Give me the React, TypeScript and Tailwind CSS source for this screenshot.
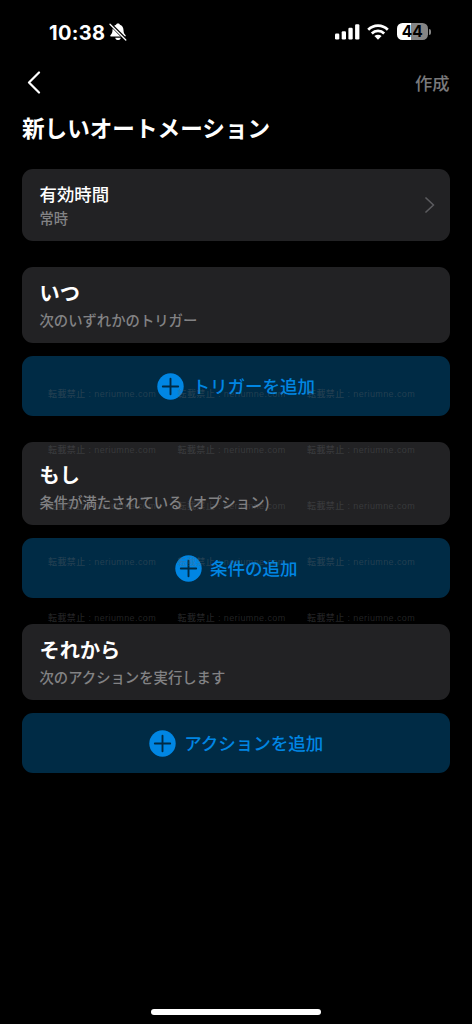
import type { FC } from 'react';

interface ISection {
  title: string;
  hint: string;
  action: string;
  cardClass: string;
}

const sections: ISection[] = [
  {
    title: 'いつ',
    hint: '次のいずれかのトリガー',
    action: 'トリガーを追加',
    cardClass: 'h-[75.5px]',
  },
  {
    title: 'もし',
    hint: '条件が満たされている (オプション)',
    action: '条件の追加',
    cardClass: 'h-[82.5px] pt-[6.5px]',
  },
  {
    title: 'それから',
    hint: '次のアクションを実行します',
    action: 'アクションを追加',
    cardClass: 'h-[75.5px]',
  },
];

const StatusBar: FC = () => (
  <div className="flex h-[63px] items-center justify-between pl-[49px] pr-[41px]">
    <div className="flex items-center gap-[4px]">
      <span className="pt-[2px] font-['Inter','Liberation_Sans',sans-serif] text-[20px] font-bold leading-none tracking-[0.35px]">
        10:38
      </span>
      <svg className="mt-[1px]" width="18" height="18" viewBox="0 0 18 18">
        <path
          d="M9 .6c1 0 1.700.5 1.900 1.200 2.400.8 3.500 2.800 3.600 5.100.1 2.800.6 3.700 1.900 5 .7.700.3 1.700-.7 1.700H2.300c-1 0-1.400-1-.7-1.700 1.300-1.300 1.800-2.200 1.900-5C3.600 4.600 4.700 2.600 7.100 1.800 7.300 1.100 8 .6 9 .6Z"
          fill="white"
        />
        <path d="M6.200 14.800h5.600c-.3 1.500-1.400 2.300-2.800 2.300s-2.500-.8-2.800-2.300Z" fill="white" />
        <path d="M1 .8 17.200 17" stroke="black" strokeWidth="3.200" />
        <path d="M1 1.200 16.800 17" stroke="white" strokeWidth="1.300" strokeLinecap="round" />
      </svg>
    </div>
    <div className="flex items-center">
      <svg width="25" height="16" viewBox="0 0 25 16" fill="white">
        <rect x="0" y="9.500" width="4.300" height="6" rx="1.200" />
        <rect x="6.700" y="7.300" width="4.300" height="8.200" rx="1.200" />
        <rect x="13.400" y="3.800" width="4.300" height="11.700" rx="1.200" />
        <rect x="20.100" y="0.200" width="4.300" height="15.300" rx="1.200" />
      </svg>
      <svg className="ml-[7px]" width="22" height="16" viewBox="0 0 22 16">
        <g fill="none" stroke="white" strokeWidth="2.700">
          <path d="M1.200 5.700a13.700 13.700 0 0 1 19.600 0" />
          <path d="M4.800 9.500a8.700 8.700 0 0 1 12.400 0" />
        </g>
        <path d="M7.400 12.100a5.200 5.200 0 0 1 7.200 0L11 15.800Z" fill="white" />
      </svg>
      <div className="ml-[8px] flex items-center gap-[1px]">
        <div className="flex h-[17px] w-[31.500px] items-center justify-center rounded-[5.500px] bg-linear-to-r from-white from-44% to-[#858585] to-44% font-['Inter','Liberation_Sans',sans-serif] text-[15.500px] font-bold leading-none text-black">
          44
        </div>
        <div className="h-[6px] w-[2px] rounded-r-full bg-[#858585]" />
      </div>
    </div>
  </div>
);

const AddButton: FC<{ label: string }> = ({ label }) => (
  <button className="mt-[13.500px] flex h-[59.500px] w-full items-center justify-center gap-[8.500px] rounded-[11px] bg-[#002b45] text-[17.500px] font-medium leading-none text-[#0086e3]">
    <svg width="27" height="27" viewBox="0 0 27 27">
      <circle cx="13.500" cy="13.500" r="13.200" fill="#0086e3" />
      <path d="M5.800 13.500h15.400M13.500 5.800v15.400" stroke="#002b45" strokeWidth="1.900" strokeLinecap="round" />
    </svg>
    <span>{label}</span>
  </button>
);

const Watermark: FC = () => (
  <div className="pointer-events-none absolute left-[48px] top-[388px] grid grid-cols-[129.500px_129.500px_111px] gap-y-[44px]">
    {Array.from({ length: 15 }, (_, i) => (
      <span
        key={i}
        className="h-[12px] whitespace-nowrap font-['Liberation_Sans','Noto_Sans_CJK_JP',sans-serif] text-[9px] font-medium leading-[12px] tracking-[0.400px] text-[#65676b]/35"
      >
        転載禁止 : neriumne.com
      </span>
    ))}
  </div>
);

const App: FC = () => {
  return (
    <div className="relative flex h-[1024px] w-[472px] flex-col overflow-hidden bg-black font-['Noto_Sans_CJK_JP',sans-serif] text-white">
      <StatusBar />

      <header className="flex h-[38px] items-center justify-between pl-[27px] pr-[22.500px]">
        <svg width="14" height="23" viewBox="0 0 14 23" fill="none">
          <path d="M12 1.500 2 11.500 12 21.500" stroke="white" strokeWidth="2.200" strokeLinecap="round" strokeLinejoin="round" />
        </svg>
        <span className="pt-[2px] text-[17.300px] font-medium leading-none text-[#79797b]">作成</span>
      </header>

      <main className="px-[22px]">
        <h1 className="mt-[14px] h-[26px] whitespace-nowrap text-[22.600px] font-bold leading-[26px]">
          新しいオートメーション
        </h1>

        <div className="mt-[28.300px] flex h-[71.500px] items-center justify-between rounded-[11px] bg-[#222224] pl-[17.500px] pr-[15px]">
          <div>
            <p className="text-[17.400px] font-medium leading-[26px]">有効時間</p>
            <p className="text-[14.300px] font-medium leading-[22px] text-[#828284]">常時</p>
          </div>
          <svg width="10" height="16" viewBox="0 0 10 16" fill="none">
            <path d="M1 1 8.500 8 1 15" stroke="#5b5b5e" strokeWidth="1.700" strokeLinecap="round" strokeLinejoin="round" />
          </svg>
        </div>

        {sections.map(section => (
          <section key={section.title} className="mt-[26.500px]">
            <div
              className={`flex flex-col justify-center rounded-[11px] bg-[#222224] px-[17.500px] ${section.cardClass}`}
            >
              <h2 className="text-[20.200px] font-bold leading-[30px]">{section.title}</h2>
              <p className="text-[14.350px] font-medium leading-[24px] text-[#828284] [word-spacing:2px]">
                {section.hint}
              </p>
            </div>
            <AddButton label={section.action} />
          </section>
        ))}
      </main>

      <Watermark />

      <div className="mx-auto mb-[9px] mt-auto h-[6px] w-[170px] rounded-full bg-white" />
    </div>
  );
};

export default App;
